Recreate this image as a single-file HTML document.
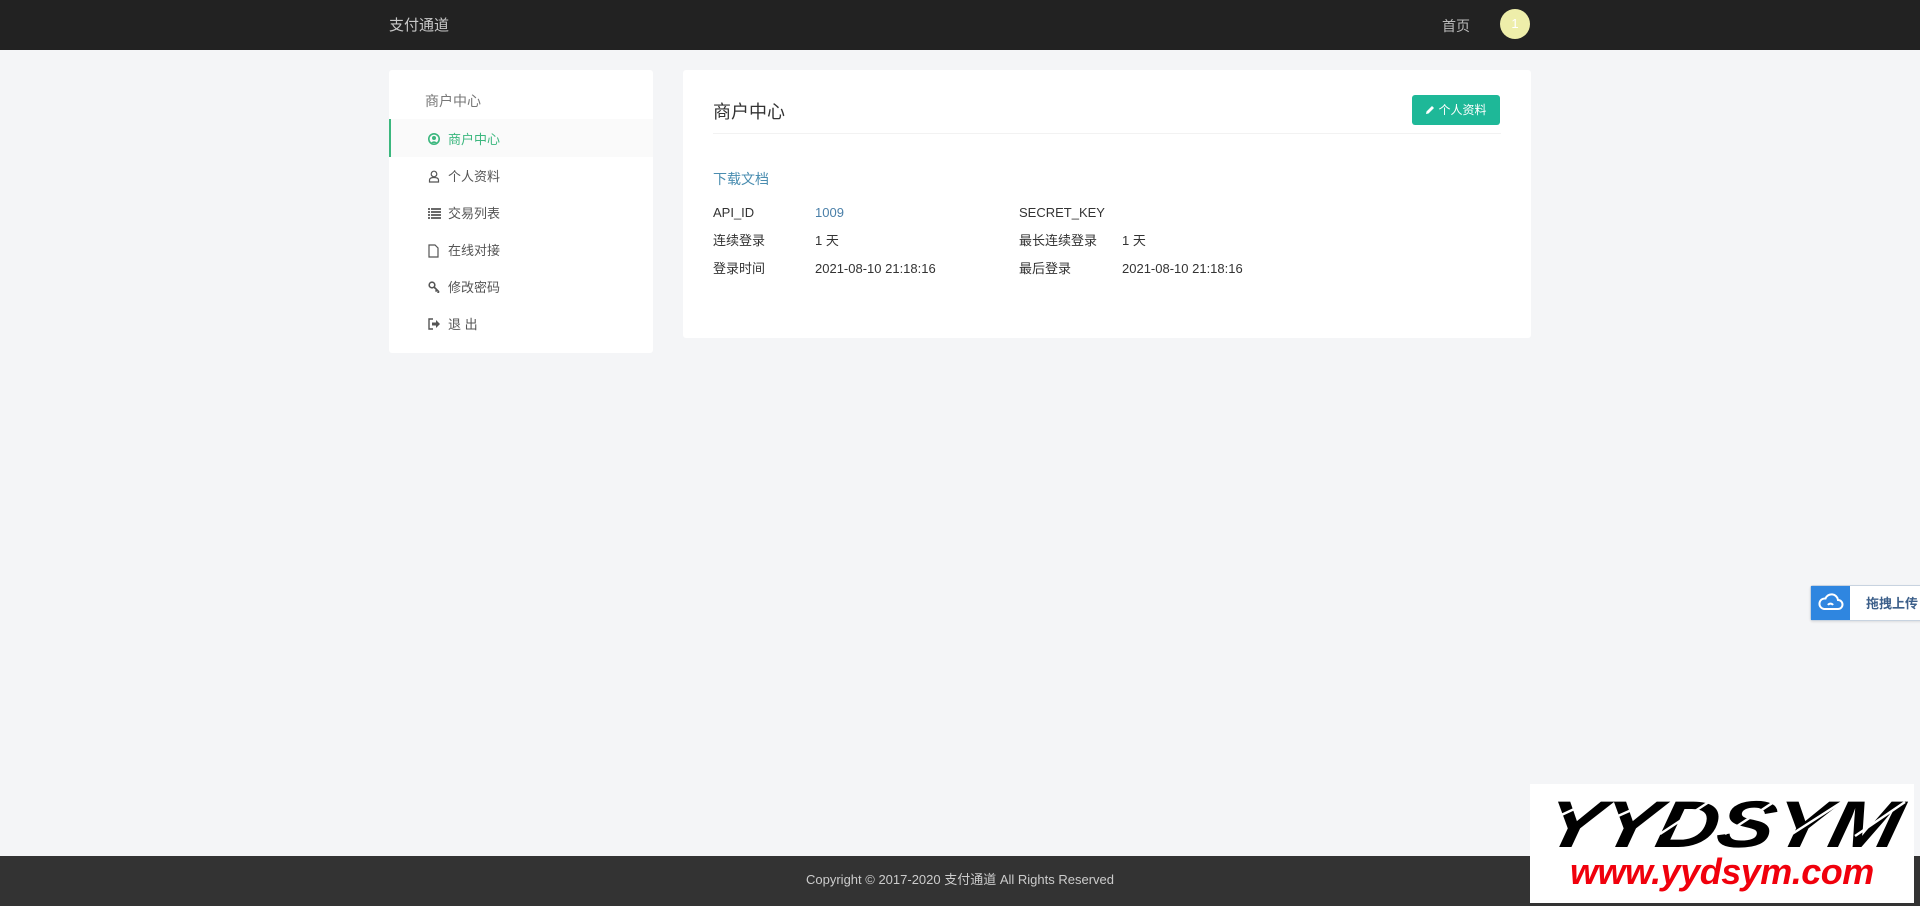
<!DOCTYPE html>
<html><head><meta charset="utf-8"><style>
*{margin:0;padding:0;box-sizing:border-box}
body{width:1920px;height:906px;background:#f4f5f7;font-family:"Liberation Sans","Noto Sans CJK SC",sans-serif;position:relative;overflow:hidden;color:#333}
.nav{position:absolute;left:0;top:0;width:1920px;height:50px;background:#222}
.brand{position:absolute;left:389px;top:17px;font-size:15px;color:#c8c8c8;line-height:18px}
.home{position:absolute;left:1442px;top:17px;font-size:14px;color:#bbb;line-height:18px}
.av{position:absolute;left:1500px;top:9px;width:30px;height:30px;border-radius:50%;background:#eeeeaa;color:#fff;font-size:13px;text-align:center;line-height:30px}
.side{position:absolute;left:389px;top:70px;width:264px;height:283px;background:#fff;border-radius:3px}
.sh{position:absolute;left:36px;top:22px;font-size:14px;color:#777;line-height:18px}
.it{position:absolute;left:0;width:264px;height:38px;font-size:13px;color:#555}
.it svg{position:absolute;left:39px;top:14px}
.it span{position:absolute;left:59px;top:12px;line-height:18px}
.act{background:#fafafa;border-left:2px solid #3bb77e;color:#3bb77e}
.act svg{left:37px}.act span{left:57px}
.main{position:absolute;left:683px;top:70px;width:848px;height:268px;background:#fff;border-radius:3px}
.title{position:absolute;left:30px;top:31px;font-size:18px;color:#333;line-height:22px}
.btn{position:absolute;left:729px;top:25px;width:88px;height:30px;background:#1eb898;border-radius:3px;color:#fff;font-size:12px;line-height:30px;text-align:center}
.line{position:absolute;left:30px;right:30px;top:63px;height:1px;background:#f2f2f2}
.dl{position:absolute;left:30px;top:100px;font-size:14px;color:#4a8db0;line-height:18px}
.c{position:absolute;font-size:13px;color:#333;line-height:18px}
.footer{position:absolute;left:0;top:856px;width:1920px;height:50px;background:#333;color:#ccc;font-size:13px;text-align:center;line-height:48px}
.up{position:absolute;left:1810px;top:585px;width:130px;height:36px;border:1px solid #c8d3e0;border-radius:3px;background:#fff;box-shadow:0 1px 2px rgba(0,0,0,.1)}
.up .b{position:absolute;left:0;top:0;width:39px;height:34px;background:#2f86e0}
.up span{position:absolute;left:55px;top:9px;font-size:13px;color:#3c5f8a;font-weight:bold;line-height:18px}
.wm{position:absolute;left:1530px;top:784px;width:384px;height:119px;background:#fff;overflow:hidden}
.wm .y{position:absolute;left:16px;top:0px;font-size:66px;font-weight:900;font-style:italic;font-family:"Liberation Sans",sans-serif;letter-spacing:-1px;color:#000;transform:skewX(-12deg) scaleX(1.3);transform-origin:left;line-height:80px}
.wm .u{position:absolute;left:40px;top:66px;font-size:36px;font-weight:bold;font-style:italic;color:#f0000c;letter-spacing:-.5px;line-height:44px}
</style></head><body>
<div class="nav"><div class="brand">支付通道</div><div class="home">首页</div><div class="av">1</div></div>
<div class="side">
<div class="sh">商户中心</div>
<div class="it act" style="top:49px"><svg width="12" height="12" viewBox="0 0 12 12"><circle cx="6" cy="6" r="5.2" fill="none" stroke="#3bb77e" stroke-width="1.6"/><circle cx="6" cy="5" r="2" fill="#3bb77e"/><path d="M2.5 10 Q6 6.5 9.5 10" fill="#3bb77e"/></svg><span>商户中心</span></div>
<div class="it" style="top:86px"><svg width="12" height="13" viewBox="0 0 12 13"><circle cx="6" cy="4" r="2.8" fill="none" stroke="#555" stroke-width="1.2"/><path d="M1.5 12 V10 Q1.5 7.5 6 7.5 Q10.5 7.5 10.5 10 V12 Z" fill="none" stroke="#555" stroke-width="1.2"/></svg><span>个人资料</span></div>
<div class="it" style="top:123px"><svg width="13" height="12" viewBox="0 0 13 12"><path d="M0 2h2M3 2h10M0 5h2M3 5h10M0 8h2M3 8h10M0 11h2M3 11h10" stroke="#555" stroke-width="1.8"/></svg><span>交易列表</span></div>
<div class="it" style="top:160px"><svg width="11" height="14" viewBox="0 0 11 14"><path d="M1 1h6l3 3v9H1z" fill="none" stroke="#555" stroke-width="1.2"/></svg><span>在线对接</span></div>
<div class="it" style="top:197px"><svg width="13" height="12" viewBox="0 0 13 12"><circle cx="4" cy="4" r="2.8" fill="none" stroke="#555" stroke-width="1.6"/><path d="M6 6l5 5M9 9l-1.5 1.5M11 11l-1.5 1" stroke="#555" stroke-width="1.6"/></svg><span>修改密码</span></div>
<div class="it" style="top:234px"><svg width="13" height="12" viewBox="0 0 13 12"><path d="M5 1H1v10h4" fill="none" stroke="#555" stroke-width="1.4"/><path d="M4 4.5h4V2l4 4-4 4V7.5H4z" fill="#555"/></svg><span>退 出</span></div>
</div>
<div class="main">
<div class="title">商户中心</div>
<div class="btn"><svg width="10" height="10" viewBox="0 0 10 10" style="vertical-align:-1px;margin-right:3px"><path d="M1 9l.5-2.5L7 1l2 2-5.5 5.5z" fill="#fff"/></svg>个人资料</div>
<div class="line"></div>
<div class="dl">下载文档</div>
<div class="c" style="left:30px;top:134px">API_ID</div><div class="c" style="left:132px;top:134px;color:#4a7fa8">1009</div>
<div class="c" style="left:336px;top:134px">SECRET_KEY</div>
<div class="c" style="left:30px;top:162px">连续登录</div><div class="c" style="left:132px;top:162px">1 天</div>
<div class="c" style="left:336px;top:162px">最长连续登录</div><div class="c" style="left:439px;top:162px">1 天</div>
<div class="c" style="left:30px;top:190px">登录时间</div><div class="c" style="left:132px;top:190px">2021-08-10 21:18:16</div>
<div class="c" style="left:336px;top:190px">最后登录</div><div class="c" style="left:439px;top:190px">2021-08-10 21:18:16</div>
</div>
<div class="up"><div class="b"><svg width="39" height="34" viewBox="0 0 39 34"><path d="M13 23h14a4.5 4.5 0 0 0 0-9 6.5 6.5 0 0 0-12.5-1.5A5 5 0 0 0 13 23z" fill="none" stroke="#fff" stroke-width="2"/><path d="M17 19a3 3 0 0 1 5 0" fill="none" stroke="#fff" stroke-width="2"/></svg></div><span>拖拽上传</span></div>
<div class="footer">Copyright © 2017-2020 支付通道 All Rights Reserved</div>
<div class="wm"><div class="y">YYDSYM</div>
<svg width="384" height="80" style="position:absolute;left:0;top:0"><path d="M12 40L55 20M70 40L115 20M130 50L185 14M195 50L250 14M262 50L315 16M325 52L375 18" stroke="#fff" stroke-width="2.5"/></svg>
<div class="u">www.yydsym.com</div></div>
</body></html>
